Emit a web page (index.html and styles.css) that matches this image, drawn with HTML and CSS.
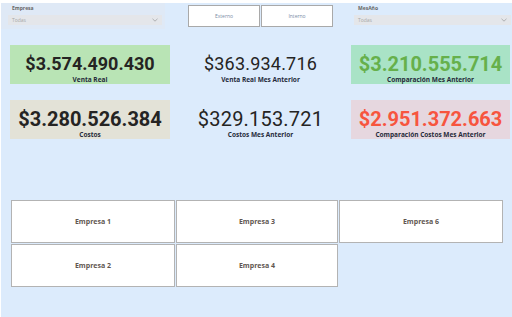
FILE: index.html
```html
<!DOCTYPE html>
<html lang="es">
<head>
    <meta charset="UTF-8">
    <meta name="viewport" content="width=device-width, initial-scale=1.0">
    <title>Tablero Ventas</title>
    <link rel="stylesheet" href="styles.css">
</head>
<body>
    <div class="page">
        <div class="topbar">
            <div class="slicer slicer-empresa">
                <div class="slicer-label">Empresa</div>
                <div class="dropdown">
                    <span>Todas</span>
                    <svg class="chevron" width="6" height="4" viewBox="0 0 6 4"><path d="M0.5 0.8 L3 3.2 L5.5 0.8" fill="none" stroke="#9a9a9a" stroke-width="0.7"/></svg>
                </div>
            </div>

            <div class="toggle-group">
                <button class="toggle-btn">Externo</button>
                <button class="toggle-btn">Interno</button>
            </div>

            <div class="slicer slicer-mes">
                <div class="slicer-label">MesAño</div>
                <div class="dropdown">
                    <span>Todas</span>
                    <svg class="chevron" width="6" height="4" viewBox="0 0 6 4"><path d="M0.5 0.8 L3 3.2 L5.5 0.8" fill="none" stroke="#9a9a9a" stroke-width="0.7"/></svg>
                </div>
            </div>
        </div>

        <div class="kpi-grid">
            <div class="card card-green">
                <div class="value value-sm">$3.574.490.430</div>
                <div class="label">Venta Real</div>
            </div>
            <div class="card">
                <div class="value value-light value-sm">$363.934.716</div>
                <div class="label">Venta Real Mes Anterior</div>
            </div>
            <div class="card card-mint">
                <div class="value value-up">$3.210.555.714</div>
                <div class="label">Comparación Mes Anterior</div>
            </div>

            <div class="card card-beige">
                <div class="value">$3.280.526.384</div>
                <div class="label">Costos</div>
            </div>
            <div class="card">
                <div class="value value-light">$329.153.721</div>
                <div class="label">Costos Mes Anterior</div>
            </div>
            <div class="card card-pink">
                <div class="value value-down">$2.951.372.663</div>
                <div class="label">Comparación Costos Mes Anterior</div>
            </div>
        </div>

        <div class="company-grid">
            <button class="company-btn">Empresa 1</button>
            <button class="company-btn">Empresa 3</button>
            <button class="company-btn">Empresa 6</button>
            <button class="company-btn">Empresa 2</button>
            <button class="company-btn">Empresa 4</button>
        </div>
    </div>
</body>
</html>
```

FILE: styles.css
```css
html {
    background-color: #ffffff;
}

body {
    margin: 0;
    padding: 3px 0 0 1px;
    font-family: "Open Sans", Arial, sans-serif;
}

.page {
    background-color: #dcebfc;
    height: 314px;
    overflow: hidden;
}

.topbar {
    display: flex;
    height: 26px;
}

.slicer {
    background-color: #dfe9f6;
    box-sizing: border-box;
    padding: 2px 3px 0 7px;
}

.slicer-empresa {
    width: 164px;
}

.slicer-mes {
    width: 160px;
    margin-left: 18px;
    padding: 2px 0 0 3px;
    background-color: transparent;
}

.slicer-label {
    font-size: 5px;
    font-weight: 700;
    color: #666666;
    line-height: 7px;
    padding-left: 4px;
}

.dropdown {
    margin-top: 3px;
    height: 10px;
    background-color: #e4e6ea;
    display: flex;
    align-items: center;
    justify-content: space-between;
    padding: 0 4px;
    font-size: 5px;
    color: #a8a8a8;
}

.toggle-group {
    display: flex;
    gap: 1px;
    margin-left: 23px;
    margin-top: 2px;
    height: 22px;
}

.toggle-btn {
    width: 72px;
    height: 22px;
    background-color: #ffffff;
    border: 1px solid #a9a9a9;
    font-family: "Open Sans", Arial, sans-serif;
    font-size: 5px;
    color: #7a8ca6;
    padding: 0;
}

.kpi-grid {
    display: grid;
    grid-template-columns: 160px 181px 159px;
    grid-auto-rows: 39px;
    row-gap: 16px;
    margin: 16px 0 0 9px;
}

.card {
    display: flex;
    flex-direction: column;
    align-items: center;
    padding-top: 8px;
    box-sizing: border-box;
    overflow: hidden;
}

.card-green {
    background-color: #b9e4b5;
}

.card-mint {
    background-color: #a9e3c6;
}

.card-beige {
    background-color: #e3e2d7;
}

.card-pink {
    background-color: #e6d7df;
}

.value {
    font-family: Roboto, Arial, sans-serif;
    font-weight: 700;
    font-size: 20px;
    line-height: 22px;
    color: #252423;
    white-space: nowrap;
}

.value-sm {
    font-size: 18px;
}

.value-light {
    font-weight: 400;
    letter-spacing: 0.2px;
}

.value-up {
    color: #66b04b;
}

.value-down {
    color: #f7553e;
}

.label {
    margin-top: 1px;
    font-size: 6.5px;
    line-height: 8px;
    font-weight: 700;
    color: #252a3a;
    white-space: nowrap;
}

.company-grid {
    display: grid;
    grid-template-columns: 164px 162px 164px;
    grid-auto-rows: 43px;
    gap: 1px;
    margin: 61px 0 0 10px;
}

.company-btn {
    background-color: #ffffff;
    border: 1px solid #b3b3b3;
    font-family: "Open Sans", Arial, sans-serif;
    font-size: 7px;
    font-weight: 700;
    color: #5f5650;
    padding: 0;
}
```
